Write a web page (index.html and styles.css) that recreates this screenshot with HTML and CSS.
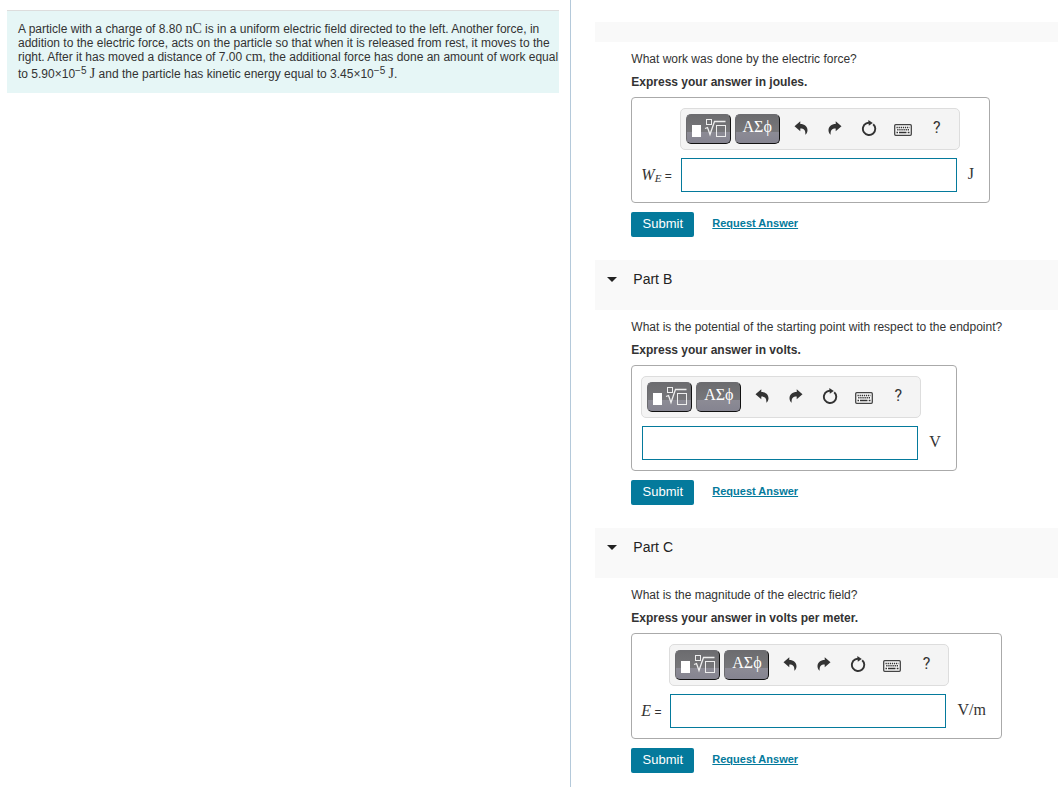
FILE: index.html
```html
<!DOCTYPE html>
<html lang="en">
<head>
<meta charset="utf-8">
<meta name="viewport" content="width=device-width, initial-scale=1">
<title>Work and Electric Potential</title>
<link rel="stylesheet" href="styles.css">
</head>
<body>
<svg class="sprite" aria-hidden="true">
  <symbol id="template" viewBox="5 4 35 20">
    <rect x="6" y="10" width="9" height="12" fill="#fff"/>
    <g fill="none" stroke="#eee">
      <rect x="20.500" y="4.500" width="5" height="5"/>
      <path d="M19 13.500l2.500-1 2.500 7 4.500-13h11" stroke-width="1.300"/>
      <rect x="30.500" y="10.500" width="9" height="11"/>
    </g>
  </symbol>
  <symbol id="undo" viewBox="0 0 14 14">
    <path fill="#333" d="M.5 5.200L6.300 .3V3C10.500 3 13.600 5.500 13.500 9.500C13.400 11.500 12.600 12.800 11.300 13.700C11.800 9.500 10 7.600 6.300 7.600V10.200Z"/>
  </symbol>
  <symbol id="redo" viewBox="0 0 14 14">
    <path fill="#333" d="M13.500 5.200L7.700 .3V3C3.500 3 .4 5.500 .5 9.500C.6 11.500 1.400 12.800 2.700 13.700C2.200 9.500 4 7.600 7.700 7.600V10.200Z"/>
  </symbol>
  <symbol id="reset" viewBox="0 0 16 16">
    <path fill="none" stroke="#333" stroke-width="1.900" d="M12.200 4.200A6.200 6.200 0 1 1 5.300 3.300L8.500 2.500"/>
    <path fill="#333" d="M7.300 0L11.800 3L7.800 5.800Z"/>
  </symbol>
  <symbol id="keyboard" viewBox="0 0 18 12">
    <rect x=".7" y=".7" width="16.600" height="10.600" rx="1" fill="#fafafa" stroke="#444" stroke-width="1.300"/>
    <path stroke="#333" stroke-width="1.400" stroke-dasharray="1.300 .8" d="M2.500 3.500h13M3.200 5.800h12"/>
    <path stroke="#333" stroke-width="1.400" d="M2.500 8.500h1.500M5 8.500h7.500M13.700 8.500h1.800"/>
  </symbol>
</svg>

<div class="page">
  <section class="intro">
    <p class="problem">A particle with a charge of 8.80 <span class="math">nC</span> is in a uniform electric field directed to the left. Another force, in addition to the electric force, acts on the particle so that when it is released from rest, it moves to the right. After it has moved a distance of 7.00 <span class="math">cm</span>, the additional force has done an amount of work equal to 5.90×10<sup>−5</sup> <span class="math">J</span> and the particle has kinetic energy equal to 3.45×10<sup>−5</sup> <span class="math">J</span>.</p>
  </section>

  <main class="parts">
    <section>
      <div class="part-bar"></div>
      <form class="part-body">
        <p class="question">What work was done by the electric force?</p>
        <p class="question instruction">Express your answer in joules.</p>
        <div class="answer">
          <div class="toolbar">
            <button type="button" class="palette" aria-label="Templates"><svg class="icon-template"><use href="#template"/></svg></button>
            <button type="button" class="palette symbols">ΑΣϕ</button>
            <div class="tools">
              <button type="button" class="tool" aria-label="Undo"><svg class="icon-arrow"><use href="#undo"/></svg></button>
              <button type="button" class="tool" aria-label="Redo"><svg class="icon-arrow"><use href="#redo"/></svg></button>
              <button type="button" class="tool" aria-label="Reset"><svg class="icon-reset"><use href="#reset"/></svg></button>
              <button type="button" class="tool" aria-label="Keyboard shortcuts"><svg class="icon-keyboard"><use href="#keyboard"/></svg></button>
              <button type="button" class="tool">?</button>
            </div>
          </div>
          <label class="variable" for="work"><i>W<sub>E</sub></i> =</label>
          <input class="entry" id="work" type="text">
          <span class="unit">J</span>
        </div>
        <div class="actions">
          <button type="button" class="submit">Submit</button>
          <a class="request" href="#">Request Answer</a>
        </div>
      </form>
    </section>

    <section>
      <header class="part-header"><button type="button" class="toggle"><span class="caret"></span>Part B</button></header>
      <form class="part-body">
        <p class="question">What is the potential of the starting point with respect to the endpoint?</p>
        <p class="question instruction">Express your answer in volts.</p>
        <div class="answer">
          <div class="toolbar">
            <button type="button" class="palette" aria-label="Templates"><svg class="icon-template"><use href="#template"/></svg></button>
            <button type="button" class="palette symbols">ΑΣϕ</button>
            <div class="tools">
              <button type="button" class="tool" aria-label="Undo"><svg class="icon-arrow"><use href="#undo"/></svg></button>
              <button type="button" class="tool" aria-label="Redo"><svg class="icon-arrow"><use href="#redo"/></svg></button>
              <button type="button" class="tool" aria-label="Reset"><svg class="icon-reset"><use href="#reset"/></svg></button>
              <button type="button" class="tool" aria-label="Keyboard shortcuts"><svg class="icon-keyboard"><use href="#keyboard"/></svg></button>
              <button type="button" class="tool">?</button>
            </div>
          </div>
          <input class="entry" type="text" aria-label="Potential">
          <span class="unit">V</span>
        </div>
        <div class="actions">
          <button type="button" class="submit">Submit</button>
          <a class="request" href="#">Request Answer</a>
        </div>
      </form>
    </section>

    <section>
      <header class="part-header"><button type="button" class="toggle"><span class="caret"></span>Part C</button></header>
      <form class="part-body last">
        <p class="question">What is the magnitude of the electric field?</p>
        <p class="question instruction">Express your answer in volts per meter.</p>
        <div class="answer">
          <div class="toolbar">
            <button type="button" class="palette" aria-label="Templates"><svg class="icon-template"><use href="#template"/></svg></button>
            <button type="button" class="palette symbols">ΑΣϕ</button>
            <div class="tools">
              <button type="button" class="tool" aria-label="Undo"><svg class="icon-arrow"><use href="#undo"/></svg></button>
              <button type="button" class="tool" aria-label="Redo"><svg class="icon-arrow"><use href="#redo"/></svg></button>
              <button type="button" class="tool" aria-label="Reset"><svg class="icon-reset"><use href="#reset"/></svg></button>
              <button type="button" class="tool" aria-label="Keyboard shortcuts"><svg class="icon-keyboard"><use href="#keyboard"/></svg></button>
              <button type="button" class="tool">?</button>
            </div>
          </div>
          <label class="variable" for="field"><i>E</i> =</label>
          <input class="entry" id="field" type="text">
          <span class="unit">V/m</span>
        </div>
        <div class="actions">
          <button type="button" class="submit">Submit</button>
          <a class="request" href="#">Request Answer</a>
        </div>
      </form>
    </section>
  </main>
</div>
</body>
</html>
```
FILE: styles.css
```css
* {
  box-sizing: border-box;
}

body {
  margin: 0;
  background: #fff;
  color: #333;
  font: 12px/16px "Liberation Sans", Arial, sans-serif;
}

p {
  margin: 0;
}

button {
  padding: 0;
  border: 0;
  background: none;
  color: inherit;
  font: inherit;
  cursor: pointer;
}

.sprite {
  display: none;
}

.page {
  display: grid;
  grid-template-columns: 54fr 46fr;
  min-height: 100vh;
}

/* Problem statement */

.intro {
  padding: 10px 11px 0 7px;
  border-right: 1px solid #b4c9da;
}

.problem {
  padding: 11px 0 12px 11px;
  border-top: 1px solid #ddd;
  background: #e6f6f6;
  line-height: 14px;
}

.problem sup {
  font-size: 10px;
  vertical-align: 4px;
}

.math {
  font: 14px/12px "Liberation Serif", "Times New Roman", serif;
}

/* Parts */

.parts {
  padding: 22px 0 0 24px;
}

.part-bar {
  height: 20px;
  background: #f9f9f9;
}

.part-header {
  padding: 11px 12px 23px;
  background: #f9f9f9;
}

.toggle {
  display: flex;
  align-items: center;
  gap: 16px;
  color: #222;
  font-size: 14px;
  line-height: 16px;
}

.caret {
  border: 5px solid transparent;
  border-top-color: #222;
  border-bottom: 0;
}

.part-body {
  padding: 9px 12px 23px 36px;
}

.part-body.last {
  padding-bottom: 12px;
}

.question {
  margin-bottom: 7px;
}

.instruction {
  font-weight: bold;
}

/* Answer box */

.answer {
  display: inline-grid;
  grid-template-columns: auto 280px auto;
  row-gap: 8px;
  align-items: center;
  padding: 10px 15px 10px 9px;
  border: 1px solid #aaa;
  border-radius: 4px;
  vertical-align: top;
}

.toolbar {
  grid-column: 2;
  display: flex;
  gap: 4px;
  height: 42px;
  padding: 5px;
  border: 1px solid #ddd;
  border-radius: 5px;
  background: #f4f4f4;
}

.palette {
  width: 45px;
  height: 30px;
  border: 1px solid #6c6c70;
  border-right-color: #111;
  border-bottom-color: #111;
  border-radius: 5px;
  background: linear-gradient(#6c6c6f, #77777a 17px, #8c8b95 17px, #858490);
  color: #fff;
}

.symbols {
  padding-bottom: 4px;
  font: 16px/16px "Liberation Serif", "Times New Roman", serif;
}

.tools {
  display: flex;
}

.tool {
  display: flex;
  align-items: center;
  justify-content: center;
  width: 34px;
  height: 28px;
  font: 16px/16px Roboto, sans-serif;
}

.icon-template {
  display: block;
  width: 35px;
  height: 20px;
  margin: 0 auto;
}

.icon-arrow {
  width: 14px;
  height: 14px;
}

.icon-reset {
  width: 16px;
  height: 16px;
}

.icon-keyboard {
  width: 18px;
  height: 12px;
  margin-top: 4px;
}

.variable {
  grid-column: 1;
  grid-row: 2;
  padding-right: 8px;
}

.variable i {
  font: italic 16px/16px "Liberation Serif", "Times New Roman", serif;
}

.variable sub {
  font-size: 11px;
  line-height: 12px;
  vertical-align: -2px;
}

.entry {
  grid-column: 2;
  grid-row: 2;
  height: 34px;
  margin: 0 3px 0 1px;
  padding: 0 6px;
  border: 1px solid #047a9c;
  background: #fff;
  font: inherit;
}

.unit {
  grid-column: 3;
  grid-row: 2;
  padding: 0 0 2px 8px;
  font: 16px/16px "Liberation Serif", "Times New Roman", serif;
}

/* Actions */

.actions {
  display: flex;
  align-items: center;
  gap: 18px;
  margin-top: 9px;
}

.submit {
  width: 63px;
  height: 25px;
  padding-bottom: 2px;
  border-radius: 2px;
  background: #047a9c;
  color: #fff;
  font-size: 13px;
}

.request {
  padding-bottom: 3px;
  color: #047a9c;
  font-size: 11px;
  font-weight: bold;
}
```
